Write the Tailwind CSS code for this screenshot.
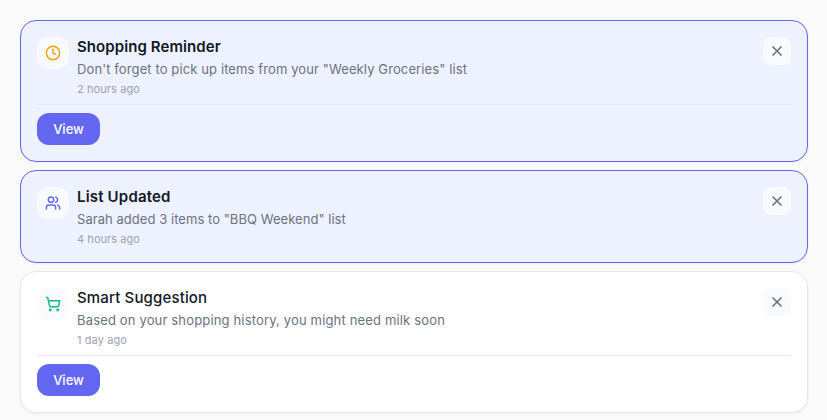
<!DOCTYPE html>
<html lang="en">
<head>
<meta charset="utf-8">
<title>Notifications</title>
<script src="https://cdn.jsdelivr.net/npm/@tailwindcss/browser@4"></script>
</head>
<body class="bg-[#fafafa] font-['Inter',sans-serif] h-[420px] overflow-hidden">
<main class="flex w-[808px] flex-col gap-2 pt-5 pl-5">
  <article class="rounded-2xl border border-[#6366f1] bg-[#eef2ff] p-4 shadow-[0_1px_3px_rgba(0,0,0,0.05)]">
    <div class="flex h-[59px] items-start gap-2">
      <div class="flex size-8 shrink-0 items-center justify-center rounded-xl bg-[#f9fafb] text-[#f59e0b]">
        <svg class="size-4" viewBox="0 0 24 24" fill="none" stroke="currentColor" stroke-width="2.2" stroke-linecap="round" stroke-linejoin="round"><circle cx="12" cy="12" r="10"/><path d="M12 6v6l4 2"/></svg>
      </div>
      <div class="flex-1">
        <h3 class="text-[15px] leading-5 font-semibold tracking-[0.08px] text-[#111827]">Shopping Reminder</h3>
        <p class="mt-0.5 text-[13px] leading-5 tracking-[0.11px] text-[#6b7280]">Don't forget to pick up items from your "Weekly Groceries" list</p>
        <p class="mt-0.5 text-[11px] leading-4 tracking-[0.09px] text-[#9ca3af]">2 hours ago</p>
      </div>
      <button class="flex size-7 items-center justify-center rounded-lg bg-[#f9fafb] text-[#6b7280]" aria-label="Dismiss">
        <svg class="size-4" viewBox="0 0 24 24" fill="none" stroke="currentColor" stroke-width="2.5" stroke-linecap="round" stroke-linejoin="round"><path d="M18 6 6 18M6 6l12 12"/></svg>
      </button>
    </div>
    <div class="mt-2 border-t border-[#e5e7eb] pt-2">
      <button class="block h-8 w-[63px] rounded-xl bg-[#6366f1] pt-0.5 text-[13px] font-medium text-white">View</button>
    </div>
  </article>
  <article class="rounded-2xl border border-[#6366f1] bg-[#eef2ff] p-4 shadow-[0_1px_3px_rgba(0,0,0,0.05)]">
    <div class="flex h-[59px] items-start gap-2">
      <div class="flex size-8 shrink-0 items-center justify-center rounded-xl bg-[#f9fafb] text-[#6366f1]">
        <svg class="size-4" viewBox="0 0 24 24" fill="none" stroke="currentColor" stroke-width="2.2" stroke-linecap="round" stroke-linejoin="round"><path d="M16 21v-2a4 4 0 0 0-4-4H6a4 4 0 0 0-4 4v2"/><circle cx="9" cy="7" r="4"/><path d="M22 21v-2a4 4 0 0 0-3-3.87M16 3.13a4 4 0 0 1 0 7.75"/></svg>
      </div>
      <div class="flex-1">
        <h3 class="text-[15px] leading-5 font-semibold tracking-[0.18px] text-[#111827]">List Updated</h3>
        <p class="mt-0.5 text-[13px] leading-5 tracking-[0.05px] text-[#6b7280]">Sarah added 3 items to "BBQ Weekend" list</p>
        <p class="mt-0.5 text-[11px] leading-4 tracking-[0.06px] text-[#9ca3af]">4 hours ago</p>
      </div>
      <button class="flex size-7 items-center justify-center rounded-lg bg-[#f9fafb] text-[#6b7280]" aria-label="Dismiss">
        <svg class="size-4" viewBox="0 0 24 24" fill="none" stroke="currentColor" stroke-width="2.5" stroke-linecap="round" stroke-linejoin="round"><path d="M18 6 6 18M6 6l12 12"/></svg>
      </button>
    </div>
  </article>
  <article class="rounded-2xl border border-[#e5e7eb] bg-white p-4 shadow-[0_1px_3px_rgba(0,0,0,0.05)]">
    <div class="flex h-[59px] items-start gap-2">
      <div class="flex size-8 shrink-0 items-center justify-center rounded-xl bg-[#f9fafb] text-[#10b981]">
        <svg class="size-4" viewBox="0 0 24 24" fill="none" stroke="currentColor" stroke-width="2.2" stroke-linecap="round" stroke-linejoin="round"><circle cx="8" cy="21" r="1"/><circle cx="19" cy="21" r="1"/><path d="M2.05 2.05h2l2.66 12.42a2 2 0 0 0 2 1.58h9.78a2 2 0 0 0 1.95-1.57l1.65-7.43H5.12"/></svg>
      </div>
      <div class="flex-1">
        <h3 class="text-[15px] leading-5 font-medium tracking-[0.15px] text-[#111827]">Smart Suggestion</h3>
        <p class="mt-0.5 text-[13px] leading-5 tracking-[0.16px] text-[#6b7280]">Based on your shopping history, you might need milk soon</p>
        <p class="mt-0.5 text-[11px] leading-4 tracking-[0.09px] text-[#9ca3af]">1 day ago</p>
      </div>
      <button class="flex size-7 items-center justify-center rounded-lg bg-[#f9fafb] text-[#6b7280]" aria-label="Dismiss">
        <svg class="size-4" viewBox="0 0 24 24" fill="none" stroke="currentColor" stroke-width="2.5" stroke-linecap="round" stroke-linejoin="round"><path d="M18 6 6 18M6 6l12 12"/></svg>
      </button>
    </div>
    <div class="mt-2 border-t border-[#e5e7eb] pt-2">
      <button class="block h-8 w-[63px] rounded-xl bg-[#6366f1] pt-0.5 text-[13px] font-medium text-white">View</button>
    </div>
  </article>
</main>
</body>
</html>
